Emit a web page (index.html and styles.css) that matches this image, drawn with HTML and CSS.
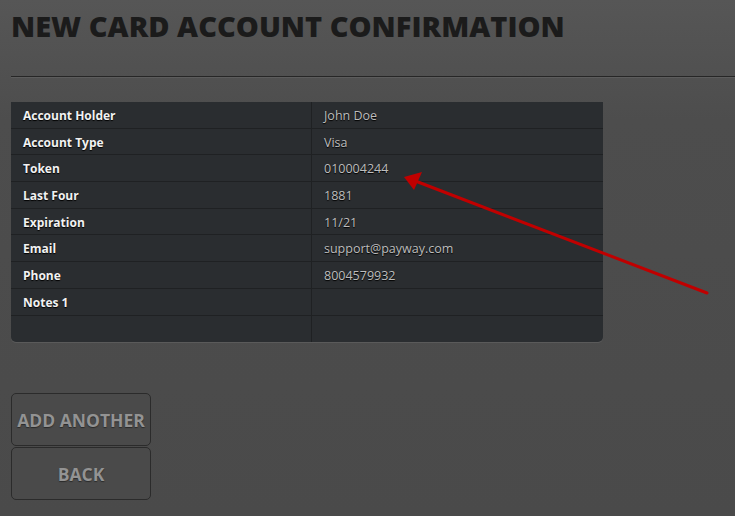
FILE: index.html
```html
<!DOCTYPE html>
<html>
<head>
<meta charset="utf-8">
<link rel="stylesheet" href="styles.css">
</head>
<body>
<div class="page">
  <h1 class="title">NEW CARD ACCOUNT CONFIRMATION</h1>
  <div class="rule"></div>
  <div class="card">
    <div class="row"><div class="label">Account Holder</div><div class="value">John Doe</div></div>
    <div class="row"><div class="label">Account Type</div><div class="value">Visa</div></div>
    <div class="row"><div class="label">Token</div><div class="value">010004244</div></div>
    <div class="row"><div class="label">Last Four</div><div class="value">1881</div></div>
    <div class="row"><div class="label">Expiration</div><div class="value">11/21</div></div>
    <div class="row"><div class="label">Email</div><div class="value">support@payway.com</div></div>
    <div class="row"><div class="label">Phone</div><div class="value">8004579932</div></div>
    <div class="row"><div class="label">Notes 1</div><div class="value"></div></div>
    <div class="row last"><div class="label"></div><div class="value"></div></div>
  </div>
  <div class="buttons">
    <button class="btn">ADD ANOTHER</button>
    <button class="btn">BACK</button>
  </div>
  <svg class="arrow" width="735" height="516" viewBox="0 0 735 516">
    <line x1="707" y1="293" x2="418" y2="182" stroke="#c00000" stroke-width="3" stroke-linecap="round"/>
    <polygon points="404,177 422,172 414,190" fill="#c00000"/>
  </svg>
</div>
</body>
</html>
```
FILE: styles.css
```css
* { box-sizing: border-box; }
html, body { margin: 0; padding: 0; }
body {
  width: 735px;
  height: 516px;
  overflow: hidden;
  background: linear-gradient(#565656 0px, #4d4d4d 120px, #4a4a4a 516px);
  font-family: "Open Sans", "Liberation Sans", sans-serif;
}
.page {
  position: relative;
  width: 735px;
  height: 516px;
  padding: 0 0 0 11px;
}
.title {
  margin: 0;
  padding: 8px 0 0 0;
  height: 76px;
  font-family: "Open Sans", sans-serif;
  font-weight: 800;
  font-size: 29px;
  line-height: 36px;
  color: #1b1b1b;
}
.rule {
  height: 2px;
  border-top: 1px solid #262626;
  border-bottom: 1px solid #5c5c5c;
}
.card {
  margin-top: 24px;
  width: 592px;
  background: #2a2d30;
  border-radius: 0 0 5px 5px;
  box-shadow: 0 1px 0 #5a5a5a;
}
.row {
  display: flex;
  height: 26.7px;
  border-bottom: 1px solid #1f2123;
}
.row.last { border-bottom: none; }
.label {
  width: 301px;
  padding: 1px 0 0 12px;
  border-right: 1px solid #1f2123;
  color: #f2f2f2;
  font-weight: 700;
  font-size: 12px;
  line-height: 26px;
  text-shadow: 0 1px 1px #000;
}
.value {
  flex: 1;
  padding: 1px 0 0 12px;
  color: #bdbdbd;
  font-size: 12.5px;
  line-height: 26px;
  text-shadow: 0 1px 1px #000;
}
.buttons {
  margin-top: 51px;
  display: flex;
  flex-direction: column;
  gap: 1px;
}
.btn {
  width: 140px;
  height: 53px;
  background: #4a4a4a;
  border: 1px solid #2b2b2b;
  border-radius: 5px;
  color: #939393;
  font-family: "Open Sans", sans-serif;
  font-weight: 700;
  font-size: 17.5px;
  text-shadow: 0 1px 1px #2a2a2a;
  padding: 0;
}
.arrow {
  position: absolute;
  left: 0;
  top: 0;
  pointer-events: none;
}
```
